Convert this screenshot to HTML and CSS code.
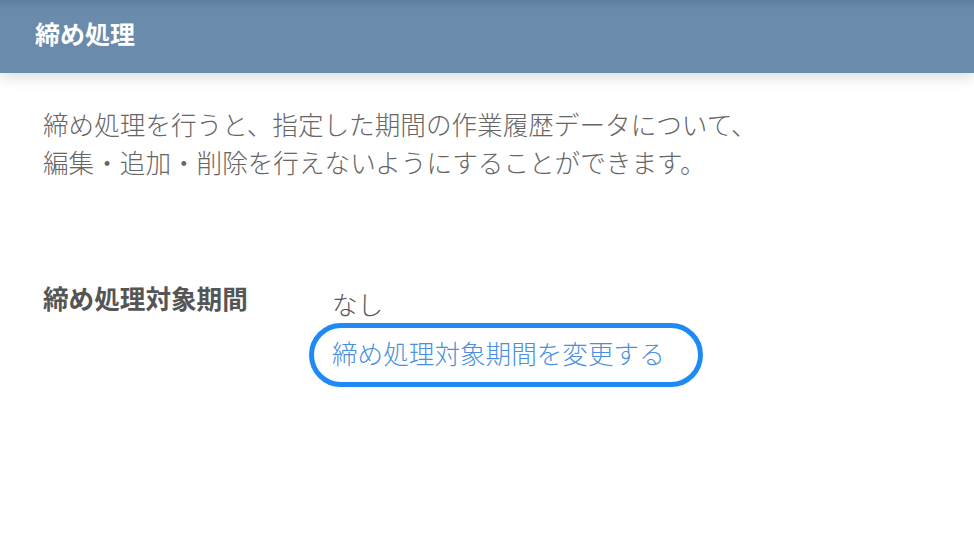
FILE: index.html
```html
<!DOCTYPE html>
<html lang="ja">
<head>
    <meta charset="UTF-8">
    <meta name="viewport" content="width=device-width, initial-scale=1.0">
    <title>締め処理</title>
    <link rel="stylesheet" href="styles.css">
</head>
<body>
    <header class="page-header">
        <h1>締め処理</h1>
    </header>

    <main class="content">
        <p class="description">
            締め処理を行うと、指定した期間の作業履歴データについて、<br>
            編集・追加・削除を行えないようにすることができます。
        </p>

        <div class="field">
            <div class="field-label">締め処理対象期間</div>
            <div class="field-value">
                <div class="value-text">なし</div>
                <a href="#" class="change-link">締め処理対象期間を変更する</a>
            </div>
        </div>
    </main>
</body>
</html>
```

FILE: styles.css
```css
body {
    font-family: 'Noto Sans CJK JP', 'Noto Sans', sans-serif;
    margin: 0;
    background-color: #fff;
    color: #666;
}
.page-header {
    height: 73px;
    display: flex;
    align-items: center;
    padding: 0 35px;
    background: linear-gradient(to bottom, #5f7f9e 0px, #6a8bab 10px, #6a8bab 100%);
    box-shadow: 0 4px 14px rgba(0, 0, 0, 0.14);
}
.page-header h1 {
    margin: 0 0 8px 0;
    font-size: 25px;
    font-weight: bold;
    color: #fff;
    line-height: 30px;
}
.content {
    padding: 32px 43px 0 43px;
}
.description {
    margin: 0;
    font-size: 25.6px;
    font-weight: 300;
    line-height: 38px;
    color: #666;
}
.field {
    display: flex;
    margin-top: 98px;
}
.field-label {
    width: 266px;
    font-size: 25.6px;
    line-height: 38px;
    font-weight: bold;
    color: #555;
}
.field-value {
    display: flex;
    flex-direction: column;
    align-items: flex-start;
    margin-top: 10px;
}
.value-text {
    padding-left: 23px;
    font-size: 25.6px;
    font-weight: 300;
    line-height: 30px;
    color: #555;
}
.change-link {
    margin-top: 4px;
    padding: 10px 33px 14px 18px;
    border: 5px solid #1e8af5;
    border-radius: 34px;
    font-size: 25.6px;
    font-weight: 300;
    line-height: 30px;
    color: #4a8fe0;
    text-decoration: none;
}
```
